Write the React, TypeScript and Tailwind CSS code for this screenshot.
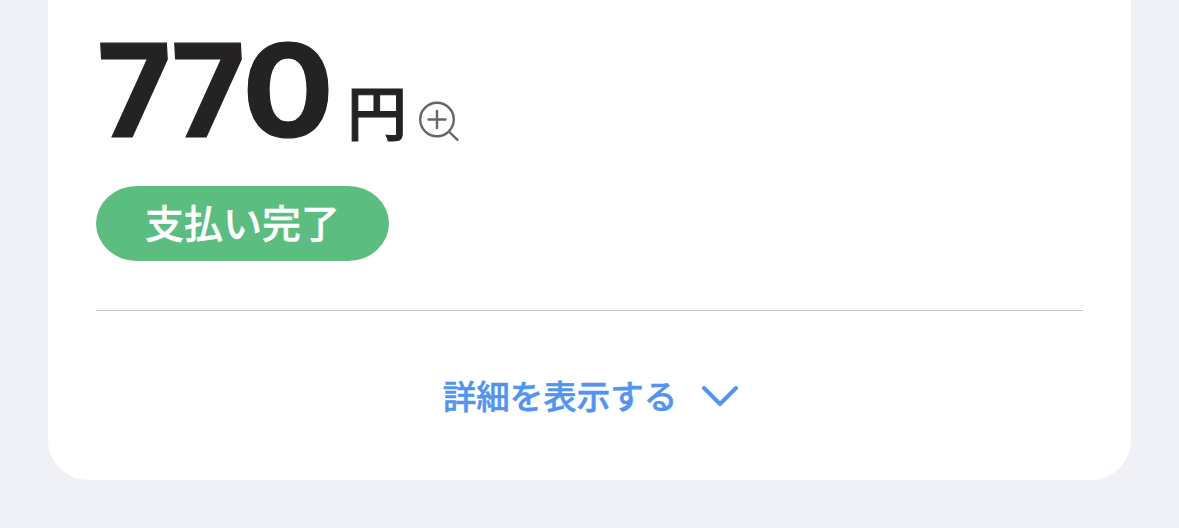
export default function App() {
  return (
    <main className="h-[528px] overflow-hidden bg-[#eff1f6] px-12 font-['Noto_Sans_CJK_JP',sans-serif]">
      <section className="flex h-[480px] flex-col rounded-b-[40px] bg-white px-12">
        <div className="flex h-[186px] shrink-0 items-start text-[#242223]">
          <span className="mt-[22px] w-[248px] whitespace-nowrap font-['Inter',sans-serif] text-[129px] leading-[136px] font-bold [-webkit-text-stroke:1.2px_currentColor]">
            <span className="inline-block origin-[0_20px] skew-x-3 tracking-[-3.5px]">77</span>
            <span className="inline-block origin-left scale-x-106">0</span>
          </span>
          <span className="mt-[80px] ml-[3px] w-[60px] text-[60px] leading-[60px] font-medium [-webkit-text-stroke:1px_currentColor]">円</span>
          <svg className="mt-[99px] ml-[10px] h-[44px] w-[44px] shrink-0" viewBox="0 0 44 44" fill="none" stroke="#666" strokeWidth="2.4" strokeLinecap="round">
            <circle cx="20" cy="20.5" r="16.8" />
            <path d="M11.5 20.5h17M20 12v17M32.3 33l8.2 7.8" />
          </svg>
        </div>
        <div className="flex h-[75px] w-[293px] shrink-0 items-center justify-center rounded-[41px/37.5px] bg-[#5bbd80] pb-[4px] text-[39px] leading-none font-medium text-white [-webkit-text-stroke:0.4px_currentColor]">支払い完了</div>
        <div className="mt-[49px] h-px shrink-0 bg-[#c8c8c8]" />
        <button className="flex flex-1 items-center justify-center gap-[25px] pl-[2px] text-[33.5px] font-medium text-[#5294ee]">
          <span className="-mt-px [-webkit-text-stroke:0.5px_currentColor]">詳細を表示する</span>
          <svg className="h-6 w-9" viewBox="0 0 36 24" fill="none" stroke="currentColor" strokeWidth="4" strokeLinecap="round" strokeLinejoin="round"><path d="M2 4l16 16L34 4" /></svg>
        </button>
      </section>
    </main>
  );
}
